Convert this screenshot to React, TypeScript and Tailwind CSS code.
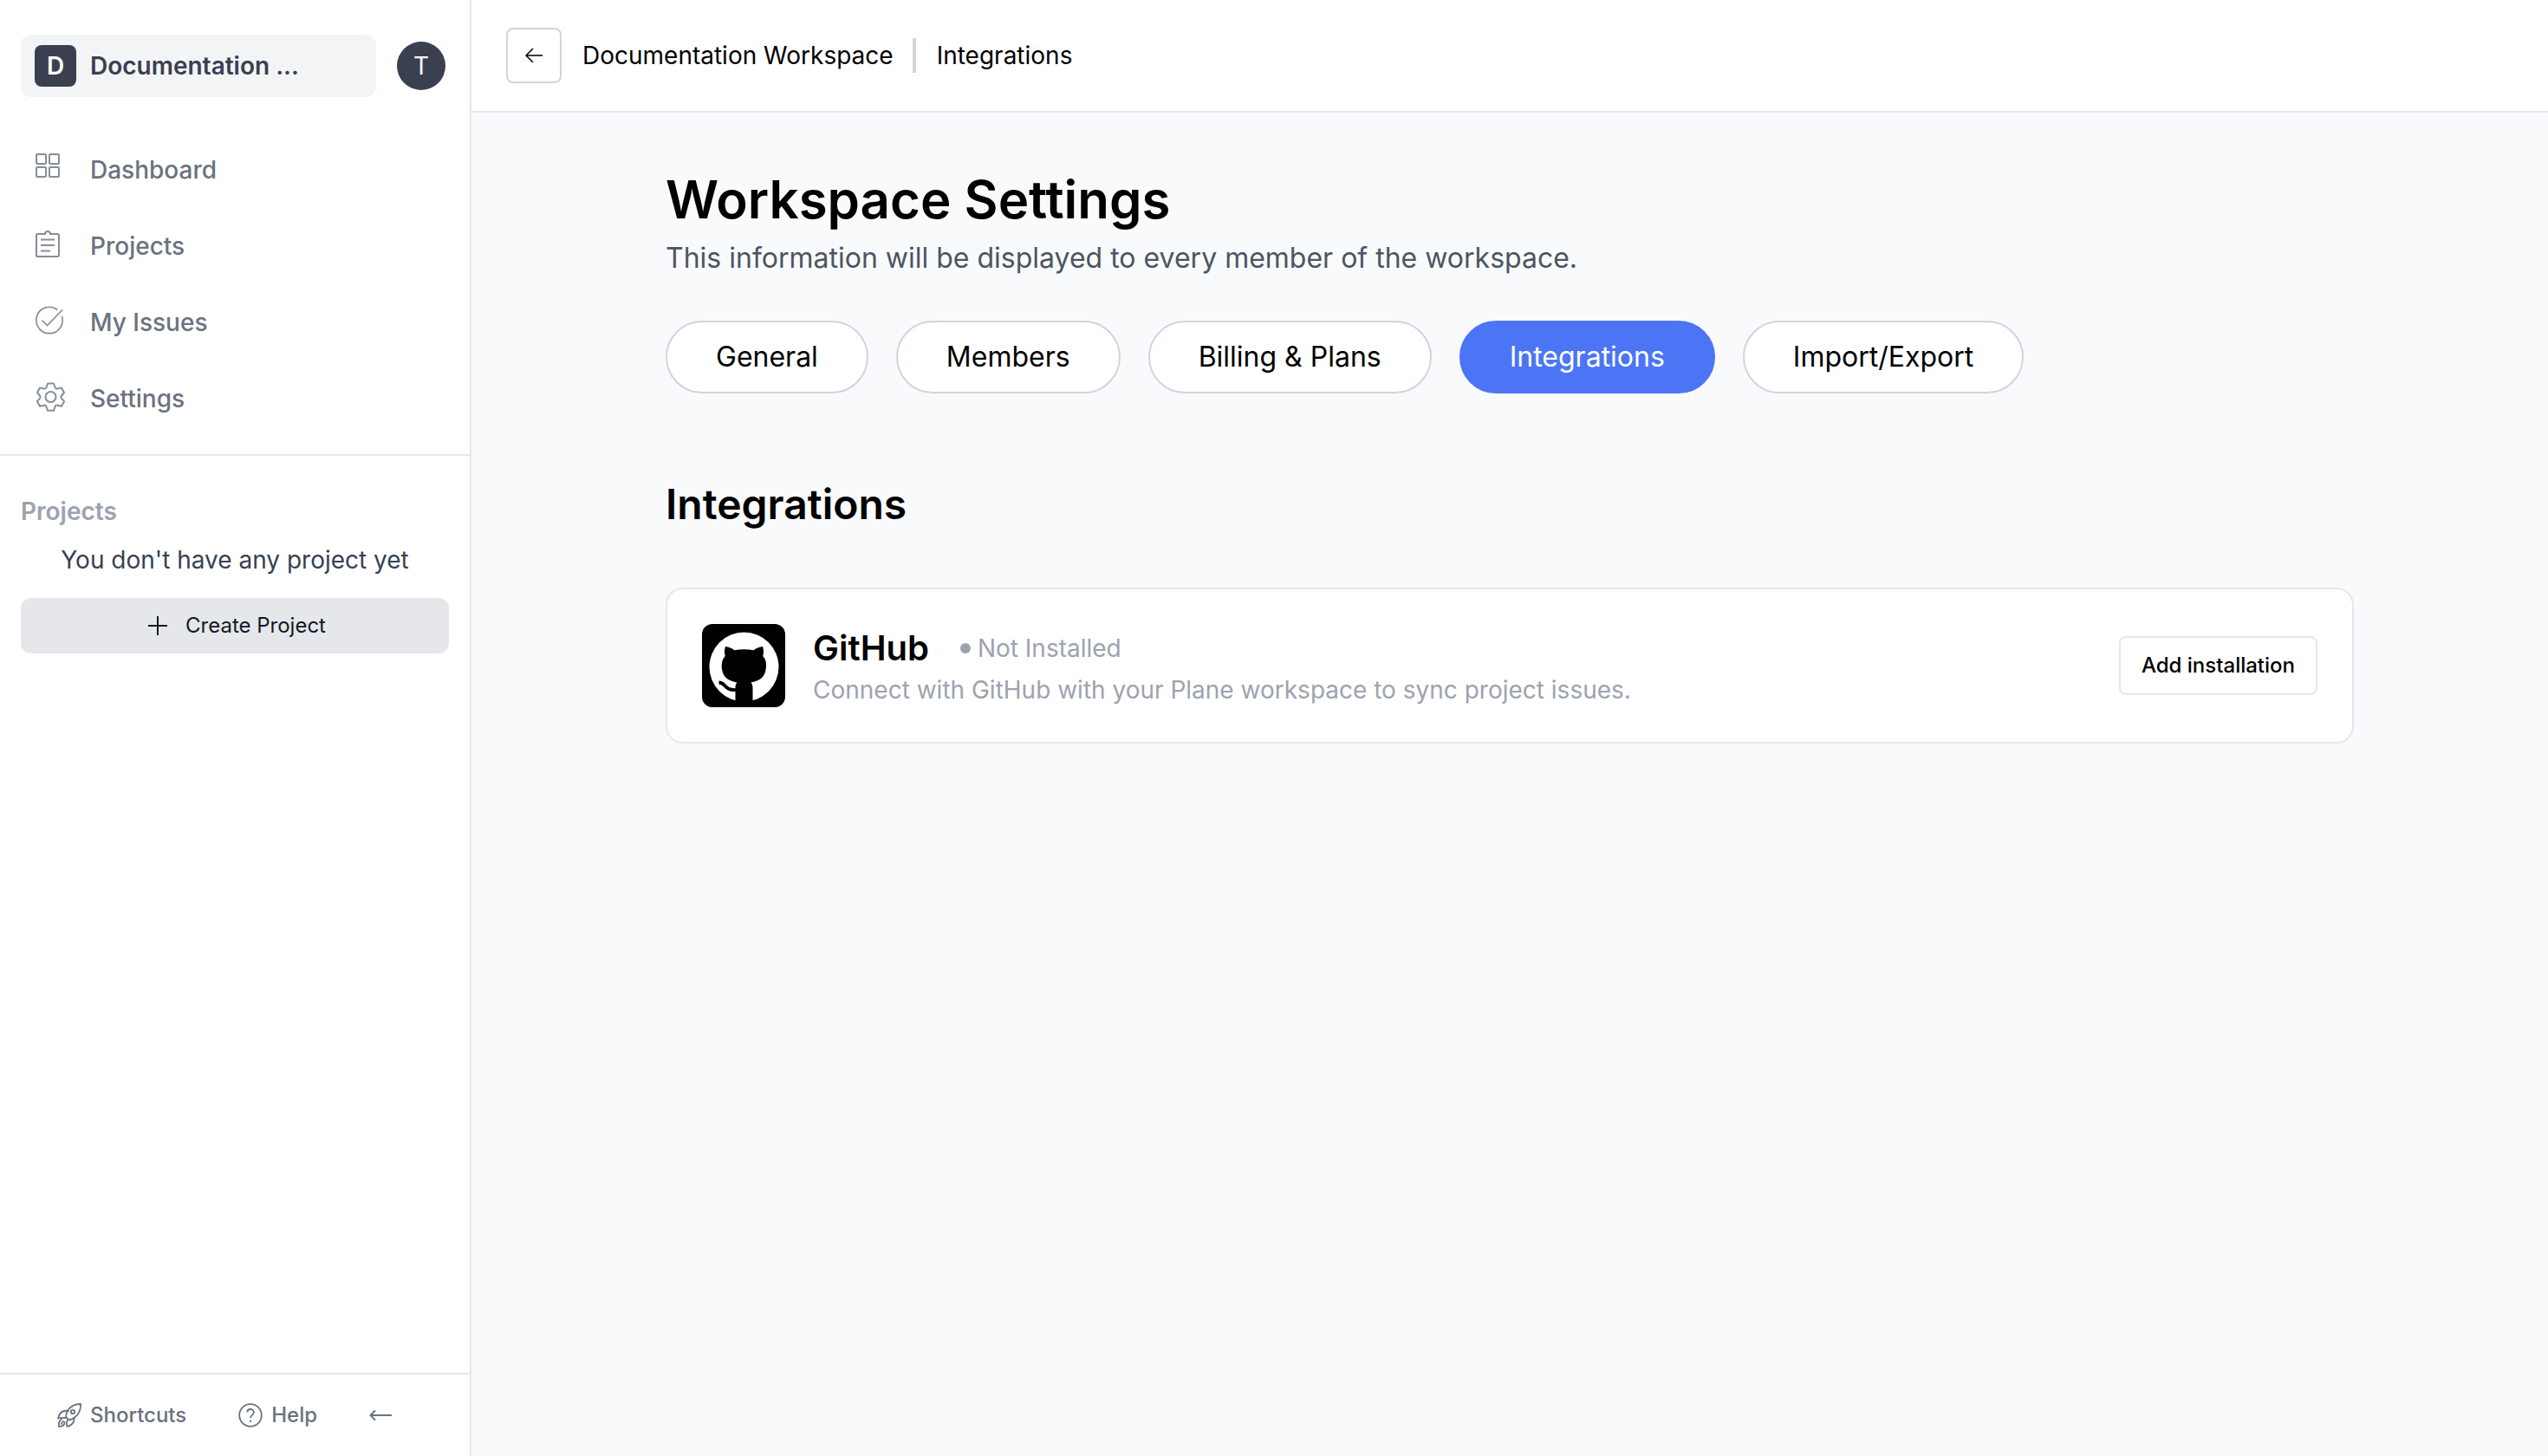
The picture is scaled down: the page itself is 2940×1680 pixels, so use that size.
import React from "react";

type IconProps = { className?: string };

const GridIcon = ({ className }: IconProps) => (
  <svg className={className} viewBox="0 0 40 40" fill="none" stroke="currentColor" strokeWidth="2">
    <rect x="2" y="2" width="11" height="11" rx="1" />
    <rect x="17" y="2" width="11" height="11" rx="1" />
    <rect x="2" y="17" width="11" height="11" rx="1" />
    <rect x="17" y="17" width="11" height="11" rx="1" />
  </svg>
);

const ClipboardIcon = ({ className }: IconProps) => (
  <svg className={className} viewBox="0 0 40 40" fill="none" stroke="currentColor" strokeWidth="2">
    <path d="M12 6H3.500A1.500 1.500 0 0 0 2 7.500v23A1.500 1.500 0 0 0 3.500 32h23a1.500 1.500 0 0 0 1.500-1.500v-23A1.500 1.500 0 0 0 26.500 6H18c0-4-6-4-6 0z" />
    <path d="M7 12.500h16M7 19h16M7 25.500h11" />
  </svg>
);

const CheckIcon = ({ className }: IconProps) => (
  <svg className={className} viewBox="0 0 40 40" fill="none" stroke="currentColor" strokeWidth="1.700">
    <path d="M26.300 5.500A15.200 15.200 0 1 0 31.500 13" />
    <path d="M8.500 17.500l6 6L32 5.500" />
  </svg>
);

const GearIcon = ({ className }: IconProps) => (
  <svg
    className={className}
    viewBox="0 0 40 40"
    fill="none"
    stroke="currentColor"
    strokeWidth="2"
    strokeLinejoin="round"
  >
    <path d="M15 2.500h7l1.500 4.500c.5 1.300 1.500 1.800 3 1.500l4.500-1 3 5.500-3 3.500c-1 1.200-1 2 0 3.200l3 3.500-3 5.500-4.500-1c-1.500-.3-2.500.2-3 1.500L22 33.700h-7l-1.500-4.500c-.5-1.300-1.500-1.800-3-1.500l-4.500 1-3-5.500 3-3.500c1-1.200 1-2 0-3.200L3 13l3-5.500 4.500 1c1.500.3 2.500-.2 3-1.500z" />
    <circle cx="18.500" cy="18" r="6" />
  </svg>
);

const PlusIcon = ({ className }: IconProps) => (
  <svg className={className} viewBox="0 0 24 24" fill="none" stroke="currentColor" strokeWidth="2">
    <path d="M12 1v22M1 12h22" />
  </svg>
);

const RocketIcon = ({ className }: IconProps) => (
  <svg
    className={className}
    viewBox="0 0 28 28"
    fill="none"
    stroke="currentColor"
    strokeWidth="1.800"
    strokeLinejoin="round"
    strokeLinecap="round"
  >
    <path d="M27 1C18 1 11 6 10 15.500l3.500 4C22 18 27.500 10 27 1z" />
    <circle cx="18" cy="10" r="2.200" />
    <path d="M13 9C7 8 2.500 11 1 17.500c3-.8 6-.8 9-.5M19.500 16.500c.5 5-2 9-8 10.500-1-2-.8-5 .5-8" />
    <path d="M5 18.500c-3 2-3.500 5-3 8.500 4 0 6.500-2 6.500-5M5 24c0-1.500.6-2.500 2-3" />
  </svg>
);

const HelpIcon = ({ className }: IconProps) => (
  <svg className={className} viewBox="0 0 28 28" fill="none" stroke="currentColor" strokeWidth="1.800">
    <circle cx="14" cy="14" r="12.800" />
    <path d="M10.300 10.500c0-4.700 7.600-4.700 7.600 0 0 3-3.800 3.300-3.800 6.500" />
    <path d="M14 19.800v2.200" />
  </svg>
);

const LongArrowIcon = ({ className }: IconProps) => (
  <svg className={className} viewBox="0 0 26 14" fill="none" stroke="currentColor" strokeWidth="2">
    <path d="M26 7H2M7 1.500L1.500 7 7 12.500" />
  </svg>
);

const ArrowIcon = ({ className }: IconProps) => (
  <svg className={className} viewBox="0 0 20 18" fill="none" stroke="currentColor" strokeWidth="1.500">
    <path d="M20 9H1M9 1L1 9l8 8" />
  </svg>
);

const GithubLogo = ({ className }: IconProps) => (
  <svg className={className} viewBox="0 0 96 96" role="img" aria-label="GitHub logo">
    <rect width="96" height="96" fill="#000" />
    <circle cx="48.500" cy="49.500" r="40" fill="#fff" />
    <path
      d="M27 26c3.500.2 7 1.800 10.500 4.300 7-1.500 15-1.500 22 0C63 27.800 66.500 26.200 70 26c1.300 4 1.300 7.500.3 11 3 3.500 4 7 3.700 12-.5 11-6 16.500-17.500 18.500C58 69.500 58.500 71 58.500 74v22h-20V74c0-3 .3-4.500 1.800-6.500C29 65.500 23 60 22.700 49c-.1-5 1-8.500 4-12-1-3.500-1-7 .3-11z"
      fill="#000"
    />
    <path d="M19.500 67.500c8 0 6 9.500 20 8.500" fill="none" stroke="#000" strokeWidth="3.800" />
    <rect x="34" y="88" width="28" height="8" fill="#000" />
  </svg>
);

const navItems = [
  { label: "Dashboard", Icon: GridIcon },
  { label: "Projects", Icon: ClipboardIcon },
  { label: "My Issues", Icon: CheckIcon },
  { label: "Settings", Icon: GearIcon },
];

const tabs = ["General", "Members", "Billing & Plans", "Integrations", "Import/Export"];

function Sidebar() {
  return (
    <aside className="flex w-[544px] shrink-0 flex-col border-r-2 border-[#e5e7eb] bg-white">
      <div className="flex items-center gap-6 px-6 pt-10">
        <button className="flex h-18 w-[410px] items-center gap-4 rounded-xl bg-[#f3f4f6] px-4 text-left">
          <span className="flex size-12 items-center justify-center rounded-lg bg-[#3a4050] text-[28px] font-semibold text-white">
            D
          </span>
          <span className="text-[28px] font-semibold text-[#3a4050]">Documentation ...</span>
        </button>
        <button className="flex size-14 items-center justify-center rounded-full bg-[#3a4050] text-[28px] text-white">
          T
        </button>
      </div>
      <nav className="mt-12 flex flex-col gap-4 border-b-2 border-[#e5e7eb] px-6 pb-7">
        {navItems.map(({ label, Icon }) => (
          <a key={label} href="#" className="flex h-18 items-center gap-6 px-4 text-[28px] font-medium text-[#6b7280]">
            <Icon className="size-10 text-[#858e99]" />
            {label}
          </a>
        ))}
      </nav>
      <section className="flex flex-col px-6 pt-11">
        <h2 className="text-[28px] leading-10 font-semibold text-[#9ca3af]">Projects</h2>
        <p className="mt-4 text-center text-[28px] leading-10 text-[#374151]">You don't have any project yet</p>
        <button className="mt-6 flex h-16 items-center justify-center gap-5 rounded-xl bg-[#e5e7eb] pl-1 text-[24px] text-[#111827]">
          <PlusIcon className="size-6" />
          Create Project
        </button>
      </section>
      <footer className="mt-auto flex h-24 items-center border-t-2 border-[#e5e7eb] pl-16 text-[24px] font-medium text-[#6b7280]">
        <button className="flex items-center gap-2.5">
          <RocketIcon className="ml-0.5 size-7" />
          Shortcuts
        </button>
        <button className="ml-15 flex items-center gap-2.5">
          <HelpIcon className="size-7" />
          Help
        </button>
        <button className="ml-15" aria-label="Collapse sidebar">
          <LongArrowIcon className="h-[14px] w-[26px]" />
        </button>
      </footer>
    </aside>
  );
}

export default function App() {
  return (
    <div className="flex min-h-screen bg-[#f9fafc] font-['Inter',sans-serif] text-black">
      <Sidebar />
      <main className="min-w-0 flex-1">
        <header className="flex h-[130px] items-center border-b-2 border-[#e5e7eb] bg-white px-10 text-[28px]">
          <button
            aria-label="Back"
            className="flex size-16 items-center justify-center rounded-lg border-2 border-[#d1d5db]"
          >
            <ArrowIcon className="h-[18px] w-5" />
          </button>
          <a href="#" className="ml-6 border-r-4 border-[#d1d5db] pr-[22px] leading-10">
            Documentation Workspace
          </a>
          <span className="ml-6 leading-10">Integrations</span>
        </header>
        <div className="px-56 pt-16">
          <h1 className="text-[60px] leading-18 font-semibold">Workspace Settings</h1>
          <p className="mt-2 text-[32px] leading-12 text-[#4b5563]">
            This information will be displayed to every member of the workspace.
          </p>
          <nav className="mt-12 flex flex-wrap gap-8 text-[32px]">
            {tabs.map((tab) => (
              <button
                key={tab}
                className={
                  tab === "Integrations"
                    ? "h-21 rounded-full border-2 border-[#4c75f5] bg-[#4c75f5] px-14 text-white"
                    : "h-21 rounded-full border-2 border-[#d1d5db] bg-white px-14"
                }
              >
                {tab}
              </button>
            ))}
          </nav>
          <h2 className="mt-24 text-[48px] leading-16 font-semibold">Integrations</h2>
          <article className="mt-16 flex items-center gap-8 rounded-[20px] border-2 border-[#e5e7eb] bg-white p-10">
            <GithubLogo className="size-24 rounded-xl" />
            <div className="flex-1">
              <div className="flex items-center gap-9">
                <h3 className="text-[40px] leading-14 font-semibold">GitHub</h3>
                <span className="flex items-center gap-2 text-[28px] text-[#9ca3af]">
                  <span className="size-3 rounded-full bg-[#9ca3af]" />
                  Not Installed
                </span>
              </div>
              <p className="text-[28px] leading-10 text-[#9ca3af]">
                Connect with GitHub with your Plane workspace to sync project issues.
              </p>
            </div>
            <button className="h-17 rounded-lg border-2 border-[#e5e7eb] px-6 text-[24px] font-medium">
              Add installation
            </button>
          </article>
        </div>
      </main>
    </div>
  );
}
